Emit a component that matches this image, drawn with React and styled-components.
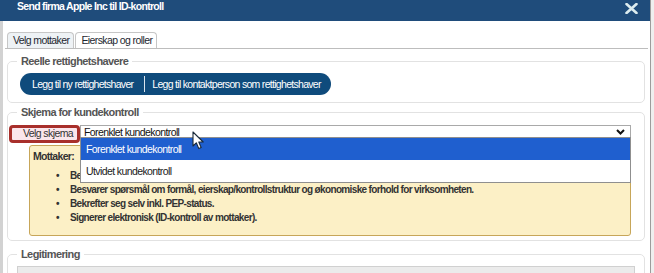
import React from 'react'
import styled, { createGlobalStyle } from 'styled-components'

const GlobalStyle = createGlobalStyle`
    html, body {
        margin: 0;
        height: 273px;
        overflow: hidden;
        background: #e8e8e8;
        font-family: "Liberation Sans", Arial, sans-serif;
        font-size: 10.5px;
        letter-spacing: -0.6px;
        color: #222;
    }
`

const Screen = styled.div`
    display: flex;
    height: 273px;
`

const Dialog = styled.div`
    width: 650px;
    flex: none;
    display: flex;
    flex-direction: column;
    background: #fff;
`

const RightEdge = styled.div`
    flex: 1;
    border-left: 1px solid #9c9c9c;
    background: #efefef;
`

const TitleBar = styled.div`
    height: 21px;
    flex: none;
    background: #1f4c7b;
    display: flex;
    align-items: flex-start;
    justify-content: space-between;
    padding: 0 12px 0 17px;
`

const Title = styled.h1`
    margin: -1px 0 0;
    font-size: 10.5px;
    line-height: 14px;
    letter-spacing: -0.7px;
    font-weight: bold;
    color: #fff;
`

const CloseIcon = styled.svg`
    margin-top: 3px;
`

const Body = styled.div`
    flex: 1;
    border-left: 3px solid #d2d2d2;
    padding: 11px 2px 0 2px;
    display: flex;
    flex-direction: column;
`

const TabList = styled.div`
    display: flex;
    gap: 1px;
    padding-left: 2px;
    height: 16px;
    border-bottom: 1px solid #bdbdbd;
`

const Tab = styled.div`
    height: 16px;
    box-sizing: border-box;
    padding: 0 4px 0 5px;
    border: 1px solid #c6c6c6;
    border-bottom: none;
    border-radius: 4px 4px 0 0;
    background: ${p => (p.$active ? '#eef2f5' : '#fff')};
    line-height: 15px;
    color: #1d2730;
    white-space: nowrap;
`

const Fieldset = styled.fieldset`
    margin: ${p => p.$top}px 3px 0 2px;
    padding: 0;
    border: 1px solid #e2e2e2;
    border-radius: 5px;
    min-width: 0;
`

const Legend = styled.legend`
    margin-left: 9px;
    padding: 0 4px;
    font-size: 11px;
    line-height: 14px;
    font-weight: bold;
    color: #555;
`

const FieldBody = styled.div`
    padding: ${p => p.$pad};
`

const ButtonGroup = styled.div`
    display: inline-flex;
    height: 22px;
    border-radius: 11px;
    background: #0f4b7c;
    padding-left: 3px;
    align-items: center;
`

const PillButton = styled.button`
    height: 16px;
    border: none;
    background: none;
    color: #fff;
    font-family: inherit;
    font-size: 10.5px;
    letter-spacing: -0.7px;
    padding: 0 ${p => (p.$last ? 10 : 11)}px 0 ${p => (p.$last ? 7 : 9)}px;
    border-left: ${p => (p.$last ? '1px solid #d9e4ee' : 'none')};
    white-space: nowrap;
    cursor: pointer;
`

const SchemaRow = styled.div`
    display: flex;
    align-items: flex-start;
    padding-top: 1px;
`

const LabelBox = styled.div`
    width: 71px;
    height: 18px;
    box-sizing: border-box;
    border: 3px solid #a82f2b;
    border-radius: 4px;
    background: #fbe6ec;
    padding-left: 11px;
    line-height: 10px;
    color: #333;
    white-space: nowrap;
    flex: none;
`

const SelectWrap = styled.div`
    flex: 1;
    position: relative;
`

const Select = styled.div`
    height: 13px;
    box-sizing: border-box;
    border: 1px solid #a9a9a9;
    border-bottom: none;
    background: #fff;
    display: flex;
    align-items: center;
    justify-content: space-between;
    padding: 0 5px 0 3px;
    line-height: 12px;
    color: #111;
`

const Dropdown = styled.div`
    position: absolute;
    left: 0;
    right: 0;
    top: 12px;
    border: 1px solid #8f8f8f;
    background: #fff;
    z-index: 2;
`

const Option = styled.div`
    height: 22px;
    line-height: 22px;
    padding-left: 5px;
    background: ${p => (p.$selected ? '#1f5fcf' : '#fff')};
    color: ${p => (p.$selected ? '#fff' : '#1a1a1a')};
`

const Cursor = styled.svg`
    position: absolute;
    left: 112px;
    top: 6px;
    z-index: 3;
`

const Notice = styled.div`
    margin: 2px 0 0 20px;
    border: 1px solid #c7a659;
    border-radius: 3px;
    background: #fcf0c6;
    padding: 3px 3px 10px;
    font-weight: bold;
    color: #333;
`

const NoticeHead = styled.div`
    line-height: 14px;
    font-size: 10.5px;
    letter-spacing: -0.7px;
`

const BulletList = styled.ul`
    list-style: none;
    margin: 6px 0 0;
    padding-left: 23px;
    font-size: 10px;
    letter-spacing: -0.65px;
`

const Bullet = styled.li`
    display: flex;
    line-height: 14px;

    &::before {
        content: '•';
        width: 14px;
        flex: none;
    }
`

const TableHead = styled.div`
    height: 20px;
    background: #ebebeb;
    border: 1px solid #d0d0d0;
`

const bullets = [
    'Bekrefter opplysninger om virksomheten.',
    'Besvarer spørsmål om formål, eierskap/kontrollstruktur og økonomiske forhold for virksomheten.',
    'Bekrefter seg selv inkl. PEP-status.',
    'Signerer elektronisk (ID-kontroll av mottaker).',
]

function App() {
    return (
        <Screen>
            <GlobalStyle />
            <Dialog>
                <TitleBar>
                    <Title>Send firma Apple Inc til ID-kontroll</Title>
                    <CloseIcon width="13" height="11" viewBox="0 0 13 11">
                        <path d="M1.5 1 L11.5 10 M11.5 1 L1.5 10" stroke="#dcecef" strokeWidth="2.6" strokeLinecap="round" />
                    </CloseIcon>
                </TitleBar>
                <Body>
                    <TabList>
                        <Tab $active>Velg mottaker</Tab>
                        <Tab>Eierskap og roller</Tab>
                    </TabList>

                    <Fieldset $top={5}>
                        <Legend>Reelle rettighetshavere</Legend>
                        <FieldBody $pad="5px 12px 7px 12px">
                            <ButtonGroup>
                                <PillButton>Legg til ny rettighetshaver</PillButton>
                                <PillButton $last>Legg til kontaktperson som rettighetshaver</PillButton>
                            </ButtonGroup>
                        </FieldBody>
                    </Fieldset>

                    <Fieldset $top={2}>
                        <Legend>Skjema for kundekontroll</Legend>
                        <FieldBody $pad="5px 13px 4px 1px">
                            <SchemaRow>
                                <LabelBox>Velg skjema</LabelBox>
                                <SelectWrap>
                                    <Select>
                                        <span>Forenklet kundekontroll</span>
                                        <svg width="9" height="6" viewBox="0 0 9 6">
                                            <polyline points="1,1 4.5,4.5 8,1" fill="none" stroke="#111" strokeWidth="2" />
                                        </svg>
                                    </Select>
                                    <Dropdown>
                                        <Option $selected>Forenklet kundekontroll</Option>
                                        <Option>Utvidet kundekontroll</Option>
                                    </Dropdown>
                                    <Cursor width="13" height="19" viewBox="0 0 13 19">
                                        <path d="M1 1 L1 15 L4.3 11.8 L6.8 17.6 L9.2 16.6 L6.8 11 L11.2 11 Z" fill="#fff" stroke="#1a2a3a" strokeWidth="1.1" strokeLinejoin="round" />
                                    </Cursor>
                                </SelectWrap>
                            </SchemaRow>
                            <Notice>
                                <NoticeHead>Mottaker:</NoticeHead>
                                <BulletList>
                                    {bullets.map(b => (
                                        <Bullet key={b}>{b}</Bullet>
                                    ))}
                                </BulletList>
                            </Notice>
                        </FieldBody>
                    </Fieldset>

                    <Fieldset $top={6}>
                        <Legend>Legitimering</Legend>
                        <FieldBody $pad="5px 9px 0 9px">
                            <TableHead />
                        </FieldBody>
                    </Fieldset>
                </Body>
            </Dialog>
            <RightEdge />
        </Screen>
    )
}

export default App
